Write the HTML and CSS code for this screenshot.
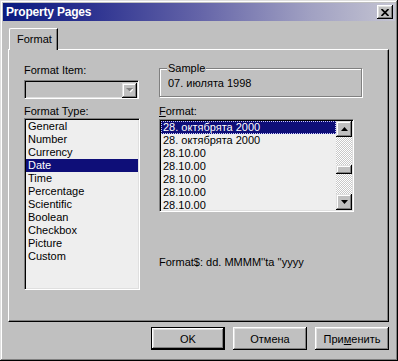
FILE: index.html
```html
<!DOCTYPE html>
<html lang="en">
<head>
  <meta charset="UTF-8">
  <title>Property Pages</title>
  <link rel="stylesheet" href="styles.css">
</head>
<body>

  <div class="window">
    <div class="titlebar">
      <span class="title">Property Pages</span>
      <button class="close">
        <svg width="8" height="7" viewBox="0 0 8 7"><path d="M0.5 0 L7.5 7 M7.5 0 L0.5 7" stroke="#000" stroke-width="1.7"/></svg>
      </button>
    </div>

    <div class="main">
      <div class="tabs">
        <div class="tab">Format</div>
      </div>

      <div class="panel">
        <div class="col-left">
          <div class="label">Format Item:</div>
          <div class="combo">
            <div class="combo-btn">
              <svg width="7" height="5" viewBox="0 0 7 5"><path d="M1 1 L8 1 L4.5 4.5z" fill="#fff"/><path d="M0 0 L7 0 L3.5 3.5z" fill="#808080"/></svg>
            </div>
          </div>
          <div class="label label-type">Format Type:</div>
          <ul class="list types">
            <li>General</li>
            <li>Number</li>
            <li>Currency</li>
            <li class="selected">Date</li>
            <li>Time</li>
            <li>Percentage</li>
            <li>Scientific</li>
            <li>Boolean</li>
            <li>Checkbox</li>
            <li>Picture</li>
            <li>Custom</li>
          </ul>
        </div>

        <div class="col-right">
          <fieldset class="group">
            <legend>Sample</legend>
            07. июлята 1998
          </fieldset>
          <div class="label label-format"><u>F</u>ormat:</div>
          <div class="list formats">
            <ul>
              <li class="selected focused">28. октябрята 2000</li>
              <li>28. октябрята 2000</li>
              <li>28.10.00</li>
              <li>28.10.00</li>
              <li>28.10.00</li>
              <li>28.10.00</li>
              <li>28.10.00</li>
            </ul>
            <div class="scrollbar">
              <div class="sb-btn">
                <svg width="7" height="4" viewBox="0 0 7 4"><path d="M3.5 0 L7 4 L0 4z"/></svg>
              </div>
              <div class="sb-track">
                <div class="sb-thumb" style="margin-top: 28px"></div>
              </div>
              <div class="sb-btn">
                <svg width="7" height="4" viewBox="0 0 7 4"><path d="M0 0 L7 0 L3.5 4z"/></svg>
              </div>
            </div>
          </div>
          <div class="format-str">Format$: dd. MMMM''ta ''yyyy</div>
        </div>
      </div>

      <div class="buttons">
        <button class="btn default">OK</button>
        <button class="btn">Отмена</button>
        <button class="btn">При<u>м</u>енить</button>
      </div>
    </div>
  </div>

</body>
</html>
```

FILE: styles.css
```css
* {
  box-sizing: border-box;
}

body {
  margin: 0;
  background: #c0c0c0;
  font-family: "Liberation Sans", Arial, sans-serif;
  font-size: 11px;
  color: #000;
}

.window {
  width: 398px;
  height: 361px;
  padding: 3px;
  background: #c0c0c0;
  box-shadow: inset -1px -1px #000, inset 1px 1px #dfdfdf,
              inset -2px -2px #808080, inset 2px 2px #fff;
  display: flex;
  flex-direction: column;
}

/* title bar */

.titlebar {
  height: 18px;
  padding: 0 2px 0 3px;
  display: flex;
  align-items: center;
  justify-content: space-between;
  background: linear-gradient(90deg, #0a1a80 0%, #2c3290 22%, #6464a8 50%, #a0a0c2 78%, #c4c4d2 100%);
  color: #fff;
  font-size: 12px;
  font-weight: bold;
  letter-spacing: -0.2px;
}

.close {
  width: 16px;
  height: 14px;
  padding: 0;
  border: none;
  background: #c0c0c0;
  display: flex;
  align-items: center;
  justify-content: center;
  box-shadow: inset -1px -1px #000, inset 1px 1px #fff,
              inset -2px -2px #808080, inset 2px 2px #dfdfdf;
}

/* tabs and panel */

.main {
  flex: 1;
  padding: 7px 6px 8px 5px;
  display: flex;
  flex-direction: column;
}

.tabs {
  height: 21px;
  display: flex;
}

.tab {
  position: relative;
  z-index: 1;
  width: 49px;
  height: 22px;
  margin-left: 1px;
  padding: 4px 0 0 7px;
  line-height: 13px;
  background: #c0c0c0;
  border-left: 1px solid #fff;
  border-top: 1px solid #fff;
  border-right: 1px solid #000;
  border-top-left-radius: 2px;
  box-shadow: inset -1px 0 #808080;
}

.panel {
  height: 273px;
  padding: 14px 0 0 15px;
  border-top: 1px solid #fff;
  border-left: 1px solid #fff;
  border-right: 1px solid #000;
  border-bottom: 1px solid #000;
  box-shadow: inset -1px -1px #808080;
  display: flex;
  gap: 19px;
}

.label {
  line-height: 13px;
}

.col-left {
  width: 116px;
  display: flex;
  flex-direction: column;
}

.col-right {
  width: 203px;
  display: flex;
  flex-direction: column;
}

/* sunken controls */

.combo,
.list {
  border: 1px solid #808080;
  border-right-color: #fff;
  border-bottom-color: #fff;
  box-shadow: inset 1px 1px #000, inset -1px -1px #dfdfdf;
}

.combo {
  width: 115px;
  height: 19px;
  margin-top: 3px;
  padding: 2px 1px 2px 0;
  display: flex;
  justify-content: flex-end;
}

.combo-btn {
  width: 15px;
  height: 15px;
  display: flex;
  align-items: center;
  justify-content: center;
  background: #c0c0c0;
  box-shadow: inset -1px -1px #000, inset 1px 1px #dfdfdf,
              inset -2px -2px #808080, inset 2px 2px #fff;
}

.label-type {
  margin-top: 6px;
}

.list {
  background: #eeeeee;
  overflow: hidden;
}

.list ul,
ul.list {
  list-style: none;
  margin: 0;
}

.types {
  height: 172px;
  margin-top: 3px;
  padding: 1px;
}

.list li {
  line-height: 13px;
  padding-left: 2px;
  white-space: nowrap;
}

.list li.selected {
  background: #0e0e78;
  color: #fff;
}

.list li.focused {
  outline: 1px dotted #c8c8ff;
  outline-offset: -1px;
}

/* sample group */

.group {
  margin: -2px 0 0 0;
  padding: 2px 8px 6px;
  min-width: 0;
  line-height: 13px;
  border: 1px solid #808080;
  box-shadow: 1px 1px #fff, inset 1px 1px #fff;
}

.group legend {
  padding: 0 1px;
  margin-left: -1px;
  background: #c0c0c0;
  line-height: 13px;
}

.label-format {
  margin-top: 8px;
}

/* format list with scrollbar */

.formats {
  width: 195px;
  height: 93px;
  margin-top: 1px;
  padding: 1px;
  display: flex;
}

.formats ul {
  flex: 1;
  padding: 0;
}

.scrollbar {
  width: 16px;
  display: flex;
  flex-direction: column;
}

.sb-btn {
  height: 16px;
  flex-shrink: 0;
  display: flex;
  align-items: center;
  justify-content: center;
  background: #c0c0c0;
  box-shadow: inset -1px -1px #000, inset 1px 1px #dfdfdf,
              inset -2px -2px #808080, inset 2px 2px #fff;
}

.sb-track {
  flex: 1;
  background: repeating-conic-gradient(#fff 0 25%, #c8c8c8 0 50%) 0 0 / 2px 2px;
}

.sb-thumb {
  height: 9px;
  background: #c0c0c0;
  box-shadow: inset -1px -1px #000, inset 1px 1px #dfdfdf,
              inset -2px -2px #808080, inset 2px 2px #fff;
}

.format-str {
  margin-top: 44px;
  line-height: 13px;
}

/* dialog buttons */

.buttons {
  margin-top: 5px;
  display: flex;
  justify-content: flex-end;
  gap: 8px;
}

.btn {
  width: 74px;
  height: 23px;
  padding: 0;
  border: none;
  background: #c0c0c0;
  font-family: "Liberation Sans", Arial, sans-serif;
  font-size: 11px;
  color: #000;
  box-shadow: inset -1px -1px #000, inset 1px 1px #fff,
              inset -2px -2px #808080, inset 2px 2px #dfdfdf;
}

.btn.default {
  border: 1px solid #000;
  box-shadow: inset -1px -1px #000, inset 1px 1px #fff,
              inset -2px -2px #808080, inset 2px 2px #dfdfdf;
}
```
